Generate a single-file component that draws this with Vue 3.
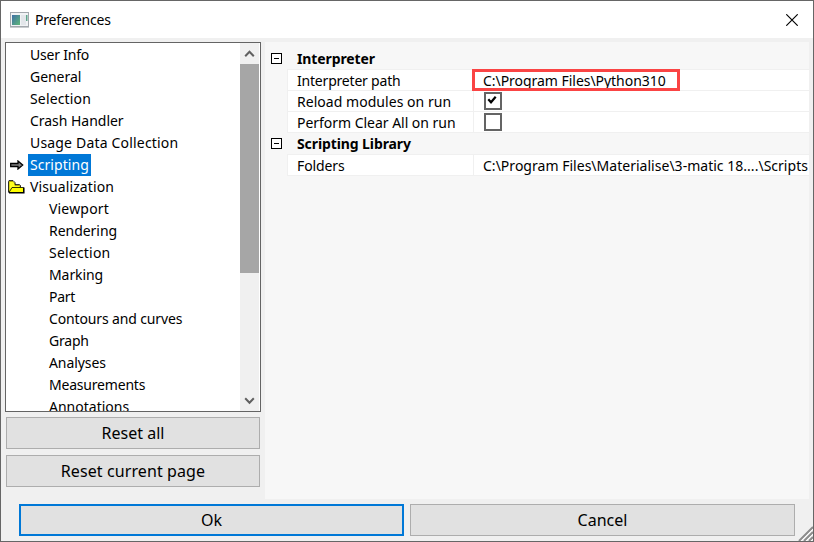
<script setup>
import { ref } from 'vue'

// ls: letter spacing in px
const items = [
  { label: 'User Info', ls: -0.2 },
  { label: 'General', ls: -0.05 },
  { label: 'Selection', ls: 0.15 },
  { label: 'Crash Handler', ls: -0.03 },
  { label: 'Usage Data Collection', ls: 0.18 },
  { label: 'Scripting', ls: 0.06, icon: 'arrow' },
  { label: 'Visualization', ls: 0.1, icon: 'folder' },
  { label: 'Viewport', ls: 0.18, child: true },
  { label: 'Rendering', ls: -0.03, child: true },
  { label: 'Selection', ls: 0.2, child: true },
  { label: 'Marking', ls: -0.08, child: true },
  { label: 'Part', ls: -0.3, child: true },
  { label: 'Contours and curves', ls: -0.14, child: true },
  { label: 'Graph', ls: -0.2, child: true },
  { label: 'Analyses', ls: -0.08, child: true },
  { label: 'Measurements', ls: -0.2, child: true },
  { label: 'Annotations', ls: 0, child: true },
]
const selected = ref(5)

const groups = [
  {
    title: 'Interpreter',
    rows: [
      { name: 'Interpreter path', ls: -0.2, value: 'C:\\Program Files\\Python310', vls: -0.04, marked: true },
      { name: 'Reload modules on run', ls: 0.04, check: true, on: true },
      { name: 'Perform Clear All on run', ls: -0.03, check: true, on: false },
    ],
  },
  {
    title: 'Scripting Library',
    rows: [
      { name: 'Folders', ls: -0.1, value: 'C:\\Program Files\\Materialise\\3-matic 18....\\Scripts', vls: 0.02 },
    ],
  },
]

const spacing = (px) => ({ letterSpacing: `${px}px` })
</script>

<template>
  <div class="window">
    <header class="titlebar">
      <svg class="app-icon" width="19" height="16" viewBox="0 0 19 16">
        <defs>
          <linearGradient id="screen" x1="0" y1="0" x2="1" y2="1">
            <stop offset="0" stop-color="#3f6fa6" />
            <stop offset="1" stop-color="#5fb878" />
          </linearGradient>
        </defs>
        <rect x=".5" y=".5" width="18" height="14" fill="#f1f3f5" stroke="#a3a8ad" />
        <path d="M0 15.5h19" stroke="#c9cccf" />
        <rect x="2" y="3" width="8" height="10" fill="url(#screen)" />
        <rect x="11" y="3" width="5" height="10" fill="#e3e6ea" />
        <rect x="16" y="3" width="1.5" height="6" fill="#5fa58c" />
      </svg>
      <span class="title">Preferences</span>
      <svg class="close" width="12" height="12" viewBox="0 0 12 12">
        <path d="M.3.3l11.4 11.4M11.7.3L.3 11.7" stroke="#000" stroke-width="1.15" />
      </svg>
    </header>

    <main class="body">
      <aside class="side">
        <div class="tree">
          <ul class="list">
            <li v-for="(item, i) in items" :key="i" class="item" :class="{ child: item.child }" @click="selected = i">
              <span class="gutter">
                <svg v-if="item.icon === 'arrow'" width="14" height="10" viewBox="0 0 14 10">
                  <path d="M.7 3.500h7.300v-2.500l4.700 4-4.700 4v-2.500H.7z" fill="#808080" stroke="#000" stroke-width="1.300" />
                </svg>
                <svg v-else-if="item.icon === 'folder'" width="17" height="14" viewBox="0 0 17 14">
                  <path d="M1 12V1.500h4l2 2v2h5v2.500" fill="#ffff20" stroke="#b0a800" />
                  <path d="M.5 12.500V1.500l.5-1h4l2 2v2h4.500l1 1v2" fill="none" stroke="#000" stroke-width=".8" />
                  <path d="M1 12.500l3-5h11.500v5z" fill="#ff0" stroke="#000" stroke-width=".8" />
                  <path d="M1 12.700h14.800V7.500" fill="none" stroke="#000" stroke-width="1.500" />
                </svg>
              </span>
              <span class="label" :class="{ active: selected === i }" :style="spacing(item.ls)">{{ item.label }}</span>
            </li>
          </ul>
          <div class="scrollbar">
            <svg class="arrow" width="19" height="21" viewBox="0 0 19 21">
              <path d="M5.200 13.200l4.300-4.400 4.300 4.400" fill="none" stroke="#606060" stroke-width="2" />
            </svg>
            <div class="thumb"></div>
            <svg class="arrow down" width="19" height="21" viewBox="0 0 19 21">
              <path d="M5.200 8.300l4.300 4.400 4.300-4.400" fill="none" stroke="#606060" stroke-width="2" />
            </svg>
          </div>
        </div>
        <button class="btn">Reset all</button>
        <button class="btn wide">Reset current page</button>
      </aside>

      <section class="panel">
        <div v-for="g in groups" :key="g.title" class="group">
          <h2 class="heading">
            <svg width="11" height="11" viewBox="0 0 11 11">
              <rect x=".5" y=".5" width="10" height="10" fill="#fff" stroke="#000" />
              <path d="M3 5.500h5" stroke="#000" />
            </svg>
            <span>{{ g.title }}</span>
          </h2>
          <div class="rows">
            <div v-for="r in g.rows" :key="r.name" class="row">
              <span class="name" :style="spacing(r.ls)">{{ r.name }}</span>
              <span class="value">
                <span v-if="r.check" class="box">
                  <svg v-if="r.on" width="14" height="14" viewBox="0 0 14 14">
                    <path d="M2.300 5.300l2.700 3L9.700 2.800" fill="none" stroke="#000" stroke-width="2.200" />
                  </svg>
                </span>
                <span v-else class="text" :style="spacing(r.vls)">{{ r.value }}</span>
                <span v-if="r.marked" class="marker"></span>
              </span>
            </div>
          </div>
        </div>
      </section>
    </main>

    <footer class="actions">
      <button class="btn primary">Ok</button>
      <button class="btn">Cancel</button>
    </footer>
    <svg class="grip" width="15" height="15" viewBox="0 0 15 15">
      <path d="M1 15L15 1M6 15l9-9M11 15l4-4" stroke="#8c8c8c" stroke-width="2" />
      <path d="M3 15L15 3M8 15l7-7M13 15l2-2" stroke="#fff" stroke-width=".8" />
    </svg>
  </div>
</template>

<style>
body {
  margin: 0;
  overflow: hidden;
}
</style>

<style scoped>
.window {
  position: relative;
  box-sizing: border-box;
  width: 814px;
  height: 542px;
  display: flex;
  flex-direction: column;
  border: 1px solid #666;
  background: #f0f0f0;
  color: #000;
  font: 14px/22px "Noto Sans", "Open Sans", sans-serif;
  overflow: hidden;
}
.titlebar {
  flex: none;
  height: 37px;
  display: flex;
  align-items: center;
  padding: 0 15px 0 9px;
  background: #fff;
}
.app-icon {
  margin-right: 6px;
}
.title {
  letter-spacing: -0.2px;
}
.close {
  margin-left: auto;
}
.body {
  flex: none;
  height: 457px;
  display: flex;
  gap: 4px;
  padding: 4px 4px 0 4px;
}
.side {
  width: 256px;
  display: flex;
  flex-direction: column;
  gap: 6px;
}
.tree {
  box-sizing: border-box;
  height: 370px;
  margin-bottom: -1px;
  display: flex;
  border: 1px solid #646464;
  padding-right: 1px;
  background: #fff;
  overflow: hidden;
}
.list {
  flex: 1;
  margin: 0;
  padding: 1px 0 0 1px;
  list-style: none;
}
.item {
  display: flex;
  align-items: center;
  height: 22px;
  white-space: nowrap;
}
.gutter {
  width: 19px;
  padding-right: 2px;
  flex: none;
  height: 22px;
  display: flex;
  align-items: center;
  justify-content: center;
}
.item.child .gutter {
  width: 38px;
}
.label {
  padding: 0 2px;
}
.label.active {
  background: #0078d7;
  color: #fff;
}
.scrollbar {
  width: 19px;
  display: flex;
  flex-direction: column;
  background: #f0f0f0;
}
.arrow {
  flex: none;
}
.arrow.down {
  margin-top: auto;
}
.thumb {
  height: 209px;
  background: #a6a6a6;
}
.btn {
  box-sizing: border-box;
  height: 32px;
  margin: 0;
  padding: 0;
  border: 1px solid #adadad;
  background: #e1e1e1;
  color: #000;
  font: 16px/28px "Noto Sans", "Open Sans", sans-serif;
}
.btn.wide {
  letter-spacing: 0.1px;
}
.side .btn {
  width: 254px;
  margin-left: 1px;
}
.panel {
  flex: 1;
  min-width: 0;
  background: #f7f7f7;
}
.heading {
  display: flex;
  align-items: center;
  gap: 15px;
  height: 21px;
  margin: 0;
  padding-left: 6px;
  font-size: 14px;
  font-weight: 700;
  letter-spacing: -0.1px;
}
.group:first-child .heading {
  padding-top: 6px;
}
.rows {
  margin-left: 22px;
  border: solid #f0f0f0;
  border-width: 1px 0 0 1px;
  background: #fff;
}
.row {
  display: flex;
  height: 20px;
  border-bottom: 1px solid #f0f0f0;
  line-height: 22px;
  white-space: nowrap;
}
.name {
  box-sizing: border-box;
  width: 185px;
  padding-left: 9px;
}
.value {
  position: relative;
  flex: 1;
  display: flex;
  align-items: center;
  border-left: 1px solid #f0f0f0;
  padding-left: 9px;
}
.text {
  padding-top: 1px;
}
.box {
  box-sizing: border-box;
  width: 18px;
  height: 18px;
  margin-left: 1px;
  border: 2px solid #646464;
  background: #fff;
}
.box svg {
  display: block;
}
.marker {
  position: absolute;
  left: -2px;
  top: -1px;
  box-sizing: border-box;
  width: 208px;
  height: 22px;
  border: 3px solid #fa4444;
}
.actions {
  display: flex;
  gap: 6px;
  padding: 5px 18px 0;
}
.actions .btn {
  width: 385px;
}
.actions .primary {
  border: 2px solid #0078d7;
}
.grip {
  position: absolute;
  right: 0;
  bottom: 0;
}
</style>
